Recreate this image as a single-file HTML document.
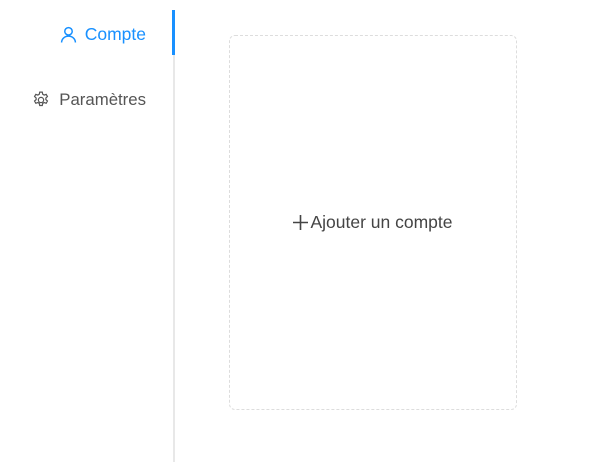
<!DOCTYPE html>
<html><head><meta charset="utf-8"><style>
body{margin:0;width:608px;height:462px;background:#fff;font-family:"Liberation Sans",sans-serif;position:relative;overflow:hidden}
.line{position:absolute;left:173px;top:10px;width:2px;height:452px;background:#e8e8e8}
.bar{position:absolute;left:172px;top:10px;width:3px;height:45px;background:#1890ff}
.item{position:absolute;right:462px;font-size:17.5px;white-space:nowrap;display:flex;align-items:center}
.item svg{margin-right:8px}
.card{position:absolute;left:229px;top:35px;width:286px;height:373px;border:1px dashed #ddd;border-radius:6px;display:flex;align-items:center;justify-content:center;color:#444;font-size:17.5px}
</style></head><body>
<div class="line"></div><div class="bar"></div>
<div class="item" style="top:24px;color:#1890ff">
<svg width="17" height="17" viewBox="0 0 16 16" fill="none" stroke="#1890ff" stroke-width="1.4"><circle cx="8" cy="5" r="3.5"/><path d="M1.5 15.5c0-3.5 3-6 6.5-6s6.5 2.5 6.5 6"/></svg>Compte</div>
<div class="item" style="top:90px;color:#555;font-size:16.8px">
<svg width="18" height="18" viewBox="0 0 24 24" fill="none" stroke="#555" stroke-width="1.6" style="margin-right:9px"><circle cx="12" cy="12" r="3.5"/><path d="M10.3 1.5h3.4l.6 2.8 1.9 1.1 2.7-.9 1.7 2.9-2.1 1.9v2.2l2.1 1.9-1.7 2.9-2.7-.9-1.9 1.1-.6 2.8h-3.4l-.6-2.8-1.9-1.1-2.7.9-1.7-2.9 2.1-1.9v-2.2l-2.1-1.9 1.7-2.9 2.7.9 1.9-1.1z"/></svg>Paramètres</div>
<div class="card"><svg width="15" height="15" viewBox="0 0 15 15" stroke="#444" stroke-width="1.6" style="margin-right:2px"><path d="M7.5 0v15M0 7.5h15"/></svg>Ajouter un compte</div>
</body></html>
